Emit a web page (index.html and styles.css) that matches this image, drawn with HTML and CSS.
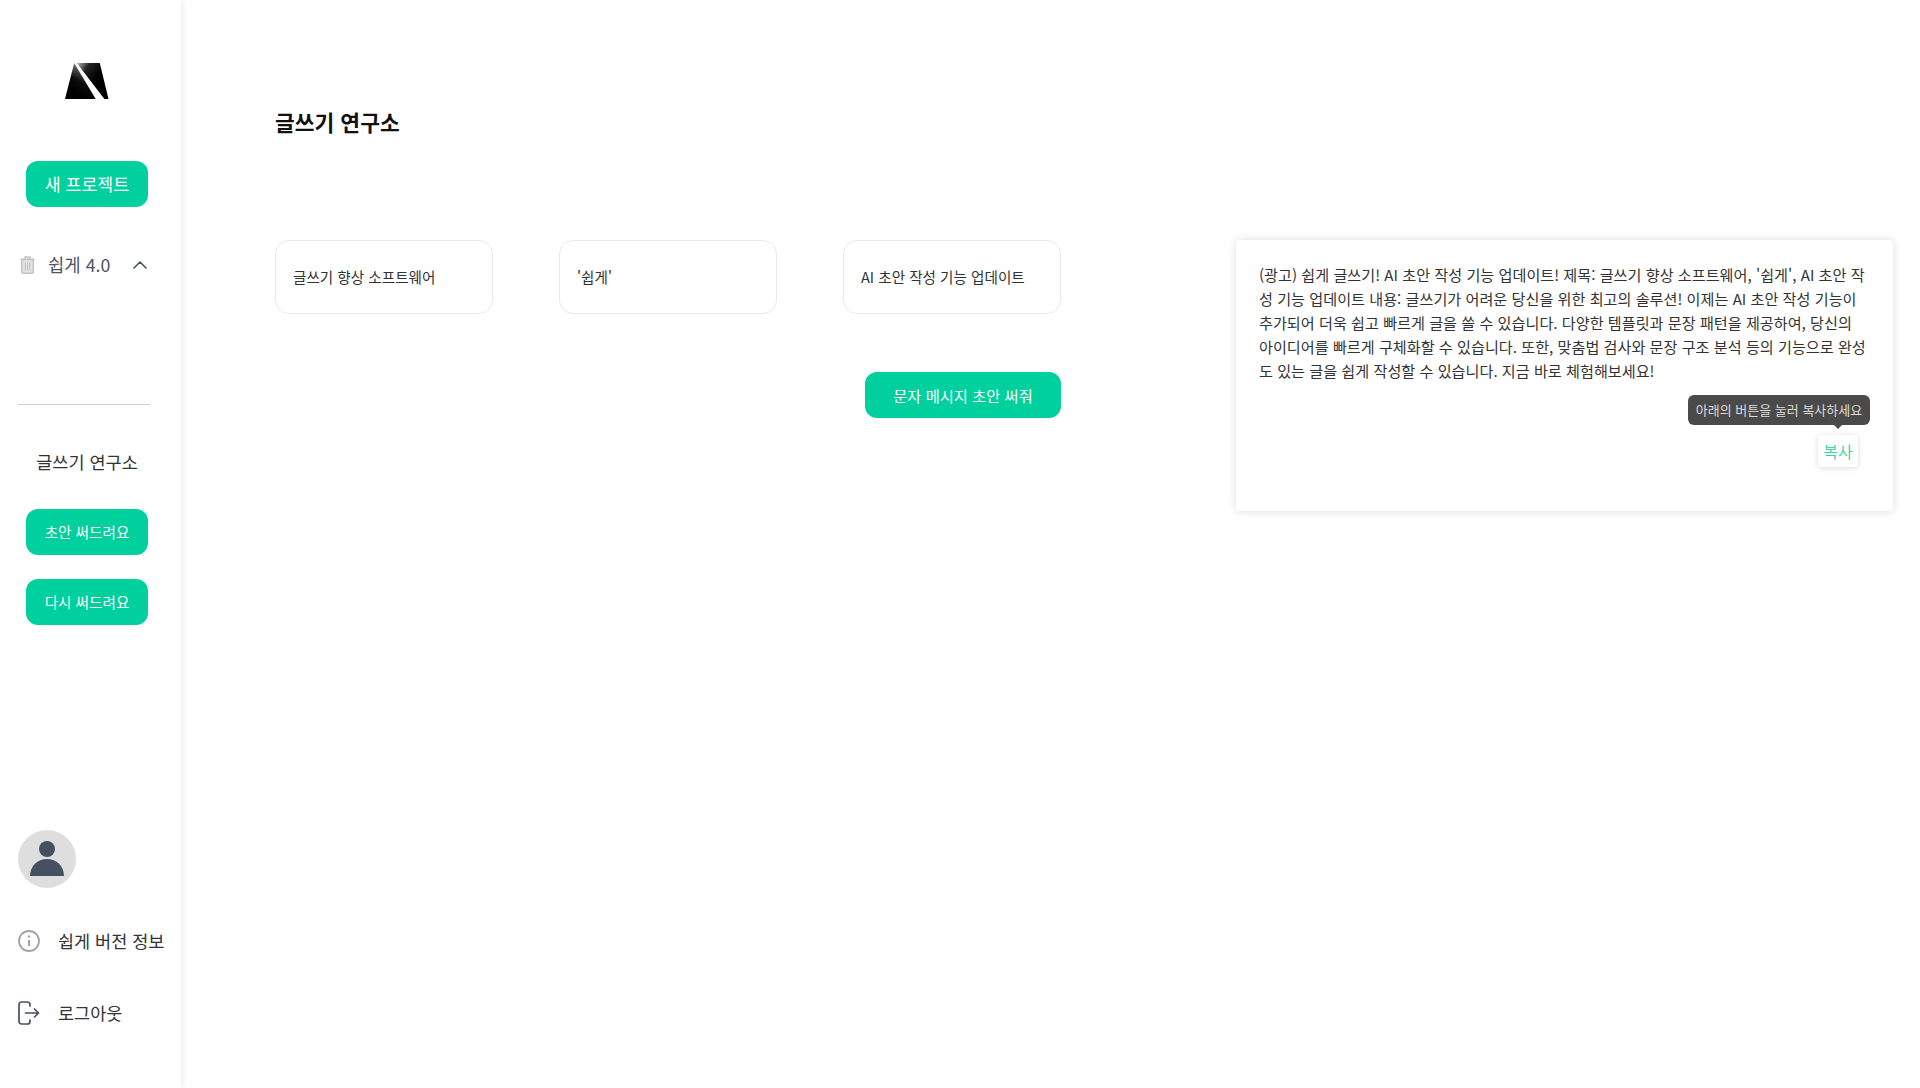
FILE: index.html
```html
<!DOCTYPE html>
<html lang="ko">
<head>
<meta charset="utf-8">
<title>글쓰기 연구소</title>
<link rel="stylesheet" href="styles.css">
</head>
<body>
<div class="app">
  <aside class="sidebar">
    <svg class="logo" width="44" height="36" viewBox="0 0 43 35">
      <defs>
        <linearGradient id="lg1" x1="0.7" y1="0" x2="0.35" y2="0.8">
          <stop offset="0" stop-color="#ddd"/><stop offset="0.3" stop-color="#555"/><stop offset="0.65" stop-color="#0a0a0a"/><stop offset="1" stop-color="#000"/>
        </linearGradient>
        <linearGradient id="lg2" x1="0" y1="0" x2="0.6" y2="0.45">
          <stop offset="0" stop-color="#bbb"/><stop offset="0.45" stop-color="#222"/><stop offset="1" stop-color="#000"/>
        </linearGradient>
      </defs>
      <polygon points="9,0 0,35 30,35" fill="url(#lg1)"/>
      <polygon points="11.5,0 34,0 42.5,35 38.5,35" fill="url(#lg2)"/>
    </svg>
    <button class="cta cta-lg cta-first">새 프로젝트</button>
    <div class="version">
      <svg class="trash" width="15" height="18" viewBox="0 0 15 18" fill="none" stroke="#c4c4c4" stroke-width="1.5">
        <path d="M0.5 3.2h14M5 3V1h5v2"/>
        <rect x="1.7" y="3.5" width="11.6" height="13.7" rx="1.2" fill="#e3e3e3"/>
        <path d="M5.3 6.5v8M7.5 6.5v8M9.7 6.5v8" stroke-width="1.1"/>
      </svg>
      <span class="version-name">쉽게 4.0</span>
      <svg class="chev" width="14" height="8" viewBox="0 0 14 8" fill="none" stroke="#444c5c" stroke-width="1.5" stroke-linecap="round" stroke-linejoin="round">
        <path d="M1 7l6-6 6 6"/>
      </svg>
    </div>
    <hr class="divider">
    <div class="lab-name">글쓰기 연구소</div>
    <button class="cta">초안 써드려요</button>
    <button class="cta cta-next">다시 써드려요</button>
    <div class="sidefoot">
      <div class="avatar">
        <svg width="34" height="35" viewBox="0 0 34 35" fill="#475063">
          <circle cx="17" cy="8" r="8"/>
          <path d="M0 35c0-10 7.500-17 17-17s17 7 17 17z"/>
        </svg>
      </div>
      <div class="foot-row foot-info">
        <svg width="22" height="24" viewBox="0 0 22 24" fill="none" stroke="#a3a3a3" stroke-width="1.8">
          <circle cx="11" cy="12" r="10"/>
          <path d="M11 11v6" stroke-width="2"/>
          <circle cx="11" cy="7.500" r="1.200" fill="#a3a3a3" stroke="none"/>
        </svg>
        <span>쉽게 버전 정보</span>
      </div>
      <div class="foot-row foot-logout">
        <svg width="22" height="24" viewBox="0 0 22 24" fill="none" stroke="#475063" stroke-width="1.7" stroke-linecap="round" stroke-linejoin="round">
          <path d="M12 5V3.500A2.500 2.500 0 0 0 9.500 1H3.500A2.500 2.500 0 0 0 1 3.500v17A2.500 2.500 0 0 0 3.500 23h6a2.500 2.500 0 0 0 2.500-2.500V19"/>
          <path d="M7.500 12H20M16.500 8l4 4-4 4"/>
        </svg>
        <span>로그아웃</span>
      </div>
    </div>
  </aside>
  <main class="main">
    <h1 class="title">글쓰기 연구소</h1>
    <div class="workspace">
      <section class="inputs">
        <div class="cards">
          <div class="card">글쓰기 향상 소프트웨어</div>
          <div class="card">'쉽게'</div>
          <div class="card">AI 초안 작성 기능 업데이트</div>
        </div>
        <button class="cta cta-write">문자 메시지 초안 써줘</button>
      </section>
      <section class="result">
        <p class="result-text">(광고) 쉽게 글쓰기! AI 초안 작성 기능 업데이트! 제목: 글쓰기 향상 소프트웨어, '쉽게', AI 초안 작성 기능 업데이트 내용: 글쓰기가 어려운 당신을 위한 최고의 솔루션! 이제는 AI 초안 작성 기능이 추가되어 더욱 쉽고 빠르게 글을 쓸 수 있습니다. 다양한 템플릿과 문장 패턴을 제공하여, 당신의 아이디어를 빠르게 구체화할 수 있습니다. 또한, 맞춤법 검사와 문장 구조 분석 등의 기능으로 완성도 있는 글을 쉽게 작성할 수 있습니다. 지금 바로 체험해보세요!</p>
        <div class="copy-wrap">
          <div class="tooltip">아래의 버튼을 눌러 복사하세요</div>
          <button class="copy">복사</button>
        </div>
      </section>
    </div>
  </main>
</div>
</body>
</html>
```
FILE: styles.css
```css
* { box-sizing: border-box; }
html, body { margin: 0; height: 100%; }
body {
  background: #fff;
  font-family: "Noto Sans CJK KR", "Noto Sans", sans-serif;
  color: #333;
}
.app { display: flex; height: 1088px; overflow: hidden; }

.sidebar {
  width: 181px;
  flex: none;
  display: flex;
  flex-direction: column;
  padding: 63px 0 0 18px;
  background: #fff;
  box-shadow: 2px 0 6px rgba(0, 0, 0, 0.08);
}
.logo { display: block; flex: none; margin-left: 47px; }

.cta {
  display: block;
  flex: none;
  width: 122px;
  height: 46px;
  margin: 0 0 0 8px;
  padding: 0 0 1px;
  border: 0;
  border-radius: 12px;
  background: #00d09e;
  color: #fff;
  font-family: inherit;
  font-size: 14.600px;
  font-weight: 400;
  line-height: 44px;
}
.cta-lg { font-size: 17.300px; }
.cta-first { margin-top: 62px; }
.cta-next { margin-top: 24px; }

.version {
  display: flex;
  align-items: center;
  height: 18px;
  margin-top: 49px;
  padding-left: 2px;
  font-size: 17.800px;
  color: #4b5563;
}
.version-name { margin: -3px 0 0 13px; white-space: nowrap; line-height: 18px; }
.chev { margin-left: 23px; }

.divider {
  flex: none;
  width: 132px;
  height: 1px;
  margin: 130px 0 0;
  border: 0;
  background: #cfcfcf;
}
.lab-name {
  width: 138px;
  margin-top: 44px;
  font-size: 17.500px;
  line-height: 26px;
  text-align: center;
  color: #333;
}
.lab-name + .cta { margin-top: 34px; }

.sidefoot { margin-top: auto; padding-bottom: 63px; }
.avatar {
  display: flex;
  align-items: flex-end;
  justify-content: center;
  width: 58px;
  height: 58px;
  padding-bottom: 12px;
  border-radius: 50%;
  background: #dedede;
}
.foot-row {
  display: flex;
  align-items: center;
  gap: 18px;
  height: 24px;
  font-size: 17.500px;
  color: #333;
  white-space: nowrap;
}
.foot-row span { margin-top: -2px; }
.foot-info { margin-top: 41px; }
.foot-logout { margin-top: 48px; }

.main { flex: 1; min-width: 0; padding: 106px 27px 0 94px; }
.title {
  margin: 0;
  font-size: 21.500px;
  font-weight: 700;
  line-height: 32px;
  color: #111;
}
.workspace {
  display: flex;
  justify-content: space-between;
  align-items: flex-start;
  margin-top: 102px;
}
.inputs { display: flex; flex-direction: column; align-items: flex-end; width: 786px; }
.cards { display: flex; justify-content: space-between; width: 100%; }
.card {
  display: flex;
  align-items: center;
  width: 218px;
  height: 74px;
  padding: 0 17px 2px;
  border: 1.500px solid #e9e9e9;
  border-radius: 14px;
  font-size: 14.600px;
  color: #333;
  white-space: nowrap;
}
.cta-write { width: 196px; height: 46px; margin-top: 58px; font-size: 15.300px; }

.result {
  width: 657px;
  height: 271px;
  padding: 22px 23px 0;
  border-radius: 4px;
  background: #fff;
  box-shadow: 0 0 10px rgba(0, 0, 0, 0.14);
}
.result-text {
  margin: 0;
  font-size: 15.150px;
  line-height: 24px;
  color: #333;
}
.copy-wrap { position: relative; display: flex; justify-content: flex-end; margin-top: 53px; padding-right: 12px; }
.copy {
  width: 40px;
  height: 32px;
  padding: 0;
  border: 0;
  border-radius: 4px;
  background: #fff;
  box-shadow: 0 1px 6px rgba(0, 0, 0, 0.14);
  color: #3fd3a8;
  font-family: inherit;
  font-size: 16px;
}
.tooltip {
  position: absolute;
  top: -40px;
  right: 0;
  width: 182px;
  height: 30px;
  border-radius: 6px;
  background: #4a4a4a;
  color: #dcdcdc;
  font-size: 13px;
  line-height: 30px;
  text-align: center;
  white-space: nowrap;
}
.tooltip::after {
  content: "";
  position: absolute;
  left: 146px;
  bottom: -4px;
  border: 4px solid transparent;
  border-bottom: 0;
  border-top-color: #4a4a4a;
}
```
